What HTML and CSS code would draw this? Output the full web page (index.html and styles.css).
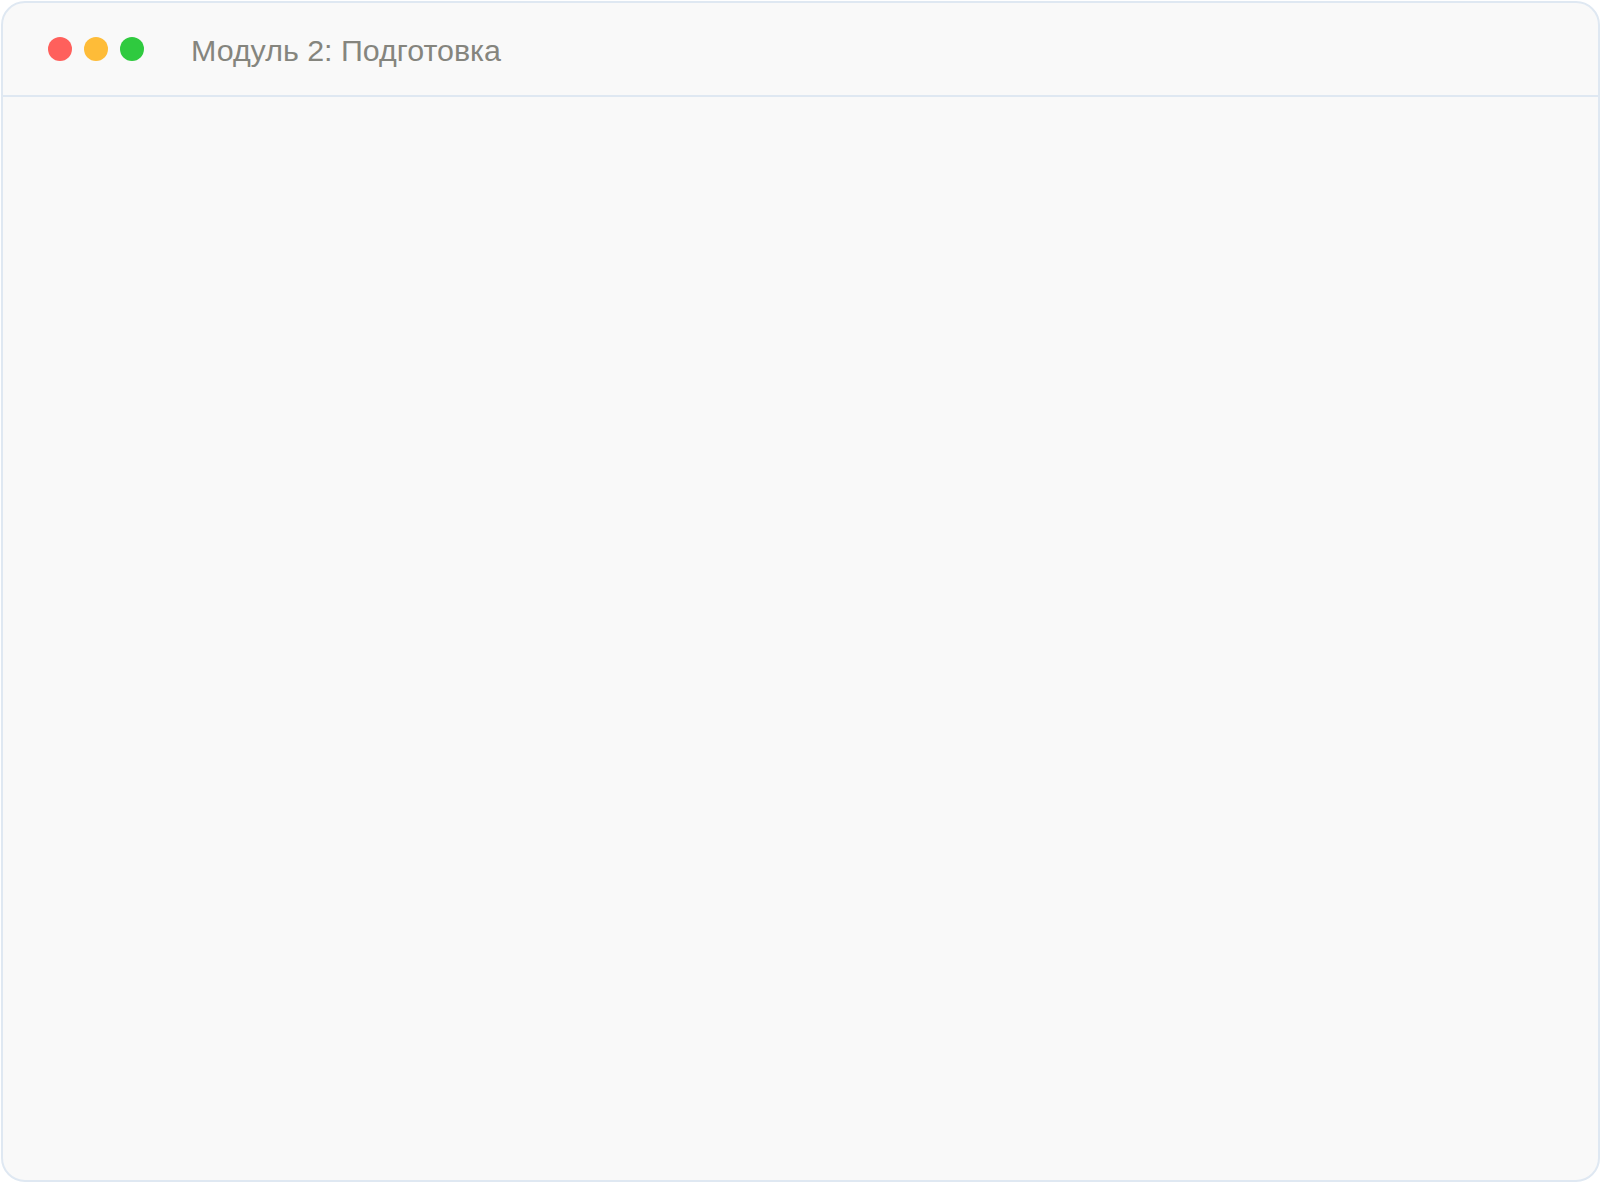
FILE: index.html
```html
<!DOCTYPE html>
<html lang="ru">
<head>
    <meta charset="UTF-8">
    <meta name="viewport" content="width=device-width, initial-scale=1.0">
    <title>Модуль 2: Подготовка</title>
    <link rel="stylesheet" href="styles.css">
</head>
<body>

<div class="window">
    <!-- заголовок окна -->
    <div class="titlebar">
        <div class="lights">
            <span class="light red"></span>
            <span class="light yellow"></span>
            <span class="light green"></span>
        </div>
        <h1 class="title">Модуль 2: Подготовка</h1>
    </div>

    <div class="content"></div>
</div>

</body>
</html>
```

FILE: styles.css
```css
html, body {
    height: 100%;
}

body {
    margin: 0;
    padding: 1px;
    box-sizing: border-box;
    background-color: #ffffff;
    font-family: "Liberation Sans", Arial, sans-serif;
}

.window {
    height: 100%;
    box-sizing: border-box;
    display: flex;
    flex-direction: column;
    background-color: #f9f9f9;
    border: 2px solid #dfe8f2;
    border-radius: 24px;
    overflow: hidden;
}

.titlebar {
    height: 92px;
    flex-shrink: 0;
    display: flex;
    align-items: center;
    padding-left: 45px;
    border-bottom: 2px solid #dfe8f2;
}

.lights {
    display: flex;
    gap: 12px;
}

.light {
    width: 24px;
    height: 24px;
    border-radius: 50%;
}

.red {
    background-color: #ff605c;
}

.yellow {
    background-color: #febc38;
}

.green {
    background-color: #2fca3f;
}

.title {
    margin: 2px 0 0 47px;
    font-size: 30.4px;
    font-weight: normal;
    color: #85857e;
}

.content {
    flex: 1;
}
```
